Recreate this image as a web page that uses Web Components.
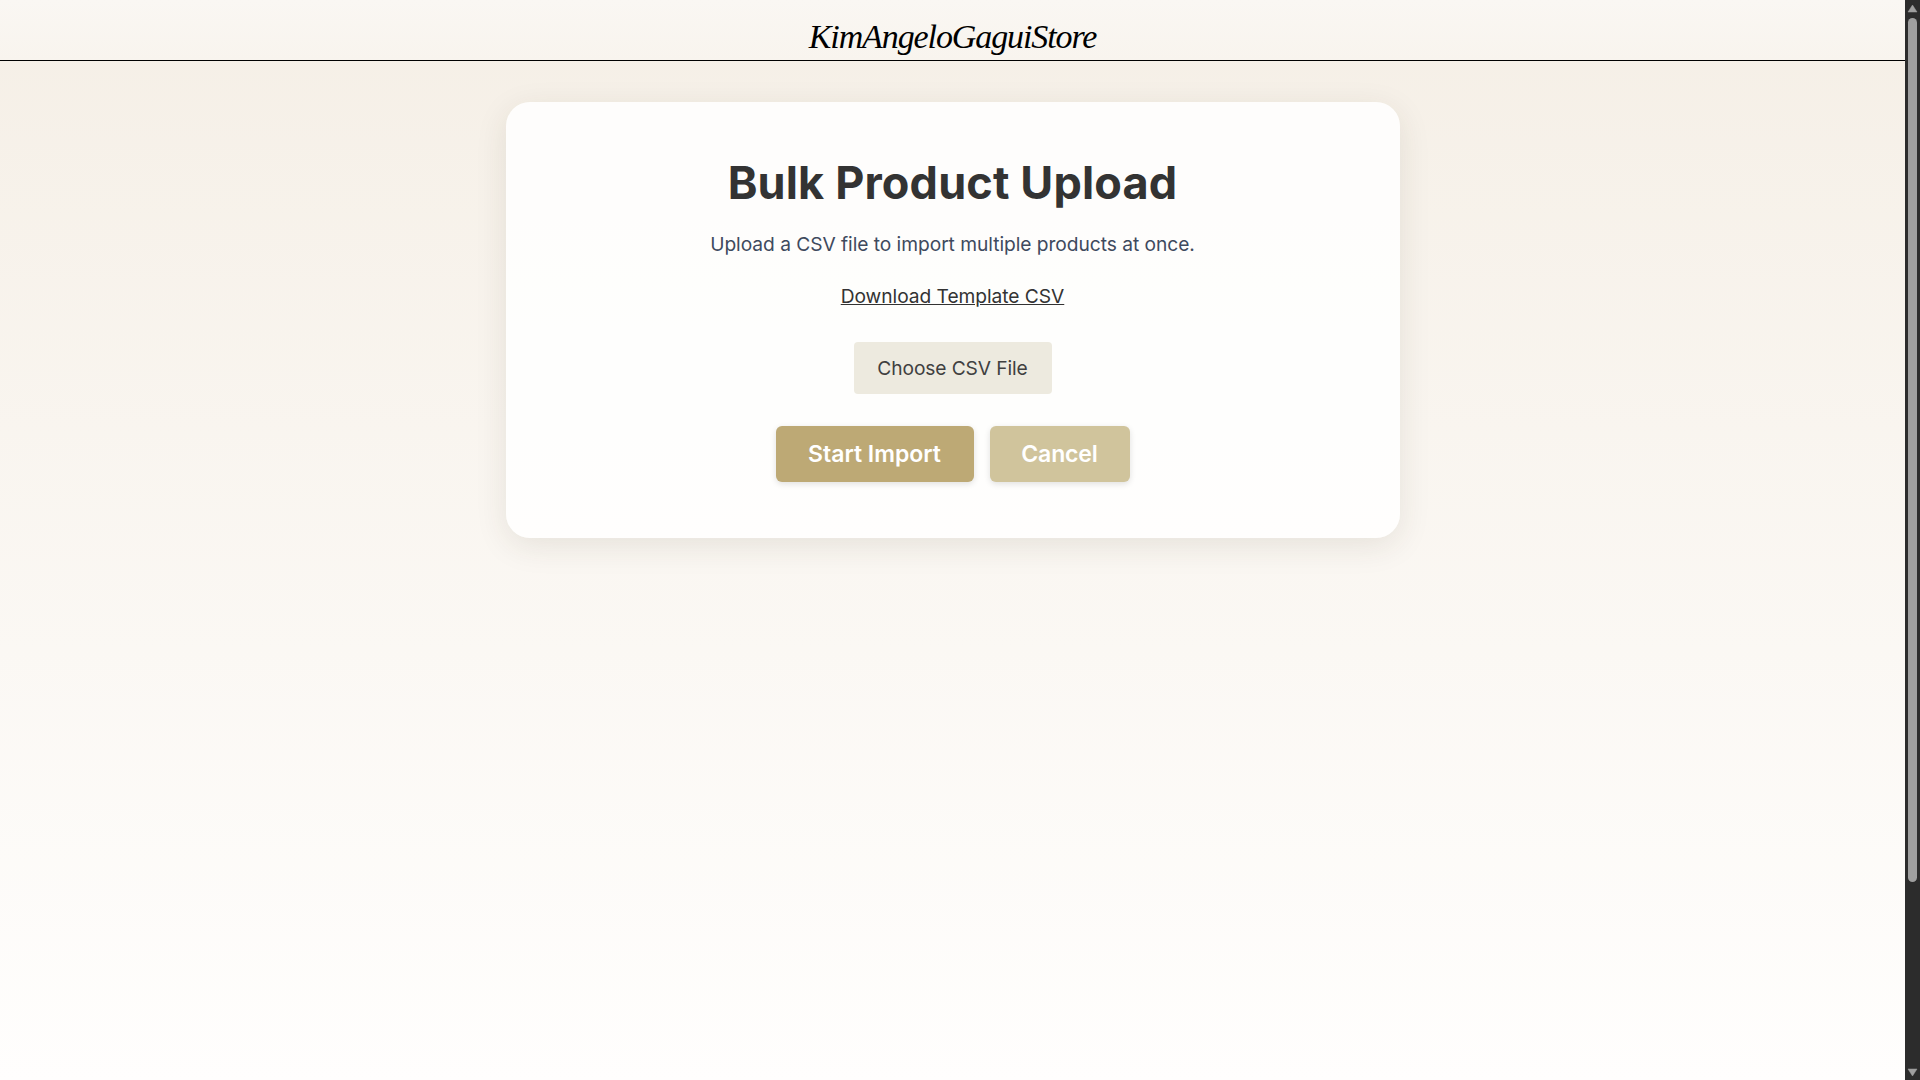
<!DOCTYPE html>
<html lang="en">
<head>
<meta charset="utf-8">
<title>Bulk Product Upload</title>
<style>
  html, body { margin: 0; height: 100%; overflow: hidden; }
  body { font-family: "Inter", "Noto Sans", sans-serif; }
</style>
</head>
<body>
<store-page>
  <store-header slot="header">KimAngeloGaguiStore</store-header>
  <upload-card title-text="Bulk Product Upload">
    Upload a CSV file to import multiple products at once.
  </upload-card>
</store-page>

<script>
class StorePage extends HTMLElement {
    constructor() {
        super();
        this.shadow = this.attachShadow({ mode: "open" });
        this.shadow.innerHTML = `
            <style>
                :host {
                    display: flex;
                    width: 100%;
                    height: 100vh;
                    overflow: hidden;
                }
                .content {
                    flex: 1;
                    display: flex;
                    flex-direction: column;
                    align-items: stretch;
                    background: linear-gradient(180deg, #f5efe6 0%, #fffefd 100%);
                }
            </style>
            <div class="content">
                <slot name="header"></slot>
                <slot></slot>
            </div>
            <page-scrollbar></page-scrollbar>`
    }
}

class PageScrollbar extends HTMLElement {
    constructor() {
        super();
        this.shadow = this.attachShadow({ mode: "open" });
        this.shadow.innerHTML = `
            <style>
                :host {
                    display: flex;
                    flex-direction: column;
                    align-items: center;
                    width: 15px;
                    height: 100%;
                    flex: none;
                    background: #2c2c2c;
                }
                svg { display: block; flex: none; }
                .thumb {
                    width: 9px;
                    height: 864px;
                    margin-top: 3px;
                    background: #9f9f9f;
                    border-radius: 5px;
                    flex: none;
                }
                .spacer { flex: 1; }
            </style>
            <svg width="15" height="15" viewBox="0 0 15 15"><path d="M7.5 5 L12 12 H3 Z" fill="#9f9f9f" stroke="#9f9f9f" stroke-linejoin="round" stroke-width=".5"/></svg>
            <div class="thumb"></div>
            <div class="spacer"></div>
            <svg width="15" height="15" viewBox="0 0 15 15"><path d="M7.5 11 L12 4 H3 Z" fill="#9f9f9f" stroke="#9f9f9f" stroke-linejoin="round" stroke-width=".5"/></svg>`
    }
}

class StoreHeader extends HTMLElement {
    constructor() {
        super();
        this.shadow = this.attachShadow({ mode: "open" });
        this.shadow.innerHTML = `
            <style>
                :host {
                    display: block;
                    height: 60px;
                    border-bottom: 1px solid #000;
                    background: linear-gradient(180deg, #faf7f3 0%, #f8f4ee 100%);
                    text-align: center;
                    /* no script face installed, closest is the serif italic */
                    font: italic 400 34px/74px "Liberation Serif", serif;
                    letter-spacing: -1.1px;
                    color: #000;
                    overflow: visible;
                }
            </style>
            <slot></slot>`
    }
}

class UploadCard extends HTMLElement {
    constructor() {
        super();
        this.shadow = this.attachShadow({ mode: "open" });
        const title = this.getAttribute("title-text");
        this.shadow.innerHTML = `
            <style>
                :host {
                    display: block;
                    box-sizing: border-box;
                    width: 894px;
                    margin: 41px auto 0;
                    padding: 54px 40px 56px;
                    background: rgba(255, 255, 255, 0.85);
                    border-radius: 24px;
                    box-shadow: 0 8px 32px rgba(60, 50, 30, 0.10);
                    text-align: center;
                }
                h1 {
                    margin: 0;
                    font: 700 45px/54px "Inter", sans-serif;
                    letter-spacing: 0.15px;
                    color: #333;
                }
                p {
                    margin: 21px 0 0;
                    font: 400 19.2px/26px "Inter", sans-serif;
                    letter-spacing: -0.045px;
                    color: #3f4a5e;
                }
                .link {
                    display: block;
                    margin: 26px 0 0;
                    font: 400 19.2px/26px "Inter", sans-serif;
                    letter-spacing: -0.05px;
                    color: #333;
                    text-decoration: underline;
                }
                .file { margin-top: 33px; }
                .actions {
                    display: flex;
                    justify-content: center;
                    gap: 16px;
                    margin-top: 32px;
                }
            </style>
            <h1>${title}</h1>
            <p><slot></slot></p>
            <a class="link" href="#">Download Template CSV</a>
            <div class="file"><file-button>Choose CSV File</file-button></div>
            <div class="actions">
                <action-button tone="primary">Start Import</action-button>
                <action-button tone="muted">Cancel</action-button>
            </div>`
    }
}

class FileButton extends HTMLElement {
    constructor() {
        super();
        this.shadow = this.attachShadow({ mode: "open" });
        this.shadow.innerHTML = `
            <style>
                :host {
                    display: inline-block;
                    box-sizing: border-box;
                    width: 198px;
                    height: 52px;
                    background: #edeadf;
                    border-radius: 4px;
                    font: 400 19.2px/52px "Inter", sans-serif;
                    letter-spacing: -0.1px;
                    color: #404040;
                    text-align: center;
                }
            </style>
            <slot></slot>`
    }
}

class ActionButton extends HTMLElement {
    constructor() {
        super();
        this.shadow = this.attachShadow({ mode: "open" });
        this.shadow.innerHTML = `
            <style>
                :host {
                    display: block;
                    box-sizing: border-box;
                    height: 56px;
                    border-radius: 6px;
                    box-shadow: 0 2px 6px rgba(0, 0, 0, 0.12);
                    font: 600 23px/56px "Inter", sans-serif;
                    color: #fff;
                    text-align: center;
                }
                :host([tone="primary"]) { background: #bda975; width: 198px; }
                :host([tone="muted"]) { background: #d0c49c; width: 140px; letter-spacing: -0.15px; }
            </style>
            <slot></slot>`
    }
}

customElements.define("store-page", StorePage);
customElements.define("page-scrollbar", PageScrollbar);
customElements.define("store-header", StoreHeader);
customElements.define("upload-card", UploadCard);
customElements.define("file-button", FileButton);
customElements.define("action-button", ActionButton);
</script>
</body>
</html>
